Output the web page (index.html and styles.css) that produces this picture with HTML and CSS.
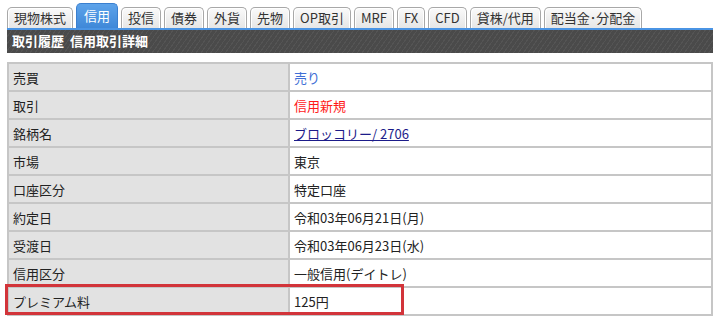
FILE: index.html
```html
<!DOCTYPE html>
<html lang="ja">
  <head>
    <meta charset="UTF-8" />
    <title>取引履歴 信用取引詳細</title>
    <link rel="stylesheet" href="styles.css">
  </head>
  <body>
    <div class="page">
      <ul class="tabs">
        <li class="tab">現物株式</li>
        <li class="tab active">信用</li>
        <li class="tab">投信</li>
        <li class="tab">債券</li>
        <li class="tab">外貨</li>
        <li class="tab">先物</li>
        <li class="tab">OP取引</li>
        <li class="tab">MRF</li>
        <li class="tab">FX</li>
        <li class="tab">CFD</li>
        <li class="tab">貸株/代用</li>
        <li class="tab">配当金･分配金</li>
      </ul>

      <div class="titleBar">取引履歴&nbsp;&nbsp;信用取引詳細</div>

      <div class="detail">
        <table class="detailTable">
          <tr><th>売買</th><td class="sell">売り</td></tr>
          <tr><th>取引</th><td class="newMargin">信用新規</td></tr>
          <tr><th>銘柄名</th><td><a href="#">ブロッコリー/ 2706</a></td></tr>
          <tr><th>市場</th><td>東京</td></tr>
          <tr><th>口座区分</th><td>特定口座</td></tr>
          <tr><th>約定日</th><td>令和03年06月21日(月)</td></tr>
          <tr><th>受渡日</th><td>令和03年06月23日(水)</td></tr>
          <tr><th>信用区分</th><td>一般信用(デイトレ)</td></tr>
          <tr><th>プレミアム料</th><td>125円</td></tr>
        </table>
        <div class="highlight"></div>
      </div>
    </div>
  </body>
</html>
```

FILE: styles.css
```css
body {
  margin: 0;
  background: #ffffff;
  font-family: "Noto Sans CJK JP", "DejaVu Sans", sans-serif;
  font-size: 13px;
  color: #222222;
}

.page {
  padding: 4px 7px 0 7px;
  width: 706px;
}

.tabs {
  display: flex;
  align-items: flex-end;
  gap: 3px;
  list-style: none;
  margin: 0;
  padding: 0;
  height: 24px;
}

.tab {
  height: 20px;
  line-height: 19px;
  padding: 0 6px;
  border: 1px solid #a8a8a8;
  border-bottom: none;
  border-radius: 5px 5px 0 0;
  background: linear-gradient(#fafafa, #e6e6e6);
  box-shadow: inset 1px 1px 0 #ffffff, inset -1px 0 0 #ffffff;
  color: #333333;
  white-space: nowrap;
}

.tab.active {
  height: 24px;
  line-height: 23px;
  padding: 0 7px;
  background: linear-gradient(#5da3ea, #3f88d8);
  border-color: #3a7fcf;
  box-shadow: none;
  color: #ffffff;
}

.titleBar {
  border-top: 2px solid #4a94e4;
  height: 23px;
  line-height: 22px;
  padding-left: 5px;
  background-color: #4a4a4a;
  background-image: repeating-linear-gradient(
    -55deg,
    #4a4a4a 0,
    #4a4a4a 3px,
    #545454 3px,
    #545454 4px
  );
  color: #ffffff;
  font-weight: bold;
}

.detail {
  position: relative;
  margin-top: 9px;
}

.detailTable {
  width: 100%;
  border-collapse: collapse;
}

.detailTable th,
.detailTable td {
  height: 26px;
  padding: 0 4px;
  border: 2px solid #c6c6c6;
  text-align: left;
  font-weight: normal;
}

.detailTable th {
  width: 271px;
  background: #e2e2e2;
}

.detailTable td {
  background: #ffffff;
}

.detailTable a {
  color: #1c1c8a;
}

.sell {
  color: #3f6fd6;
}

.newMargin {
  color: #ff1a1a;
}

.highlight {
  position: absolute;
  left: -2px;
  top: 222px;
  width: 393px;
  height: 25px;
  border: 3px solid #d2343a;
}
```
